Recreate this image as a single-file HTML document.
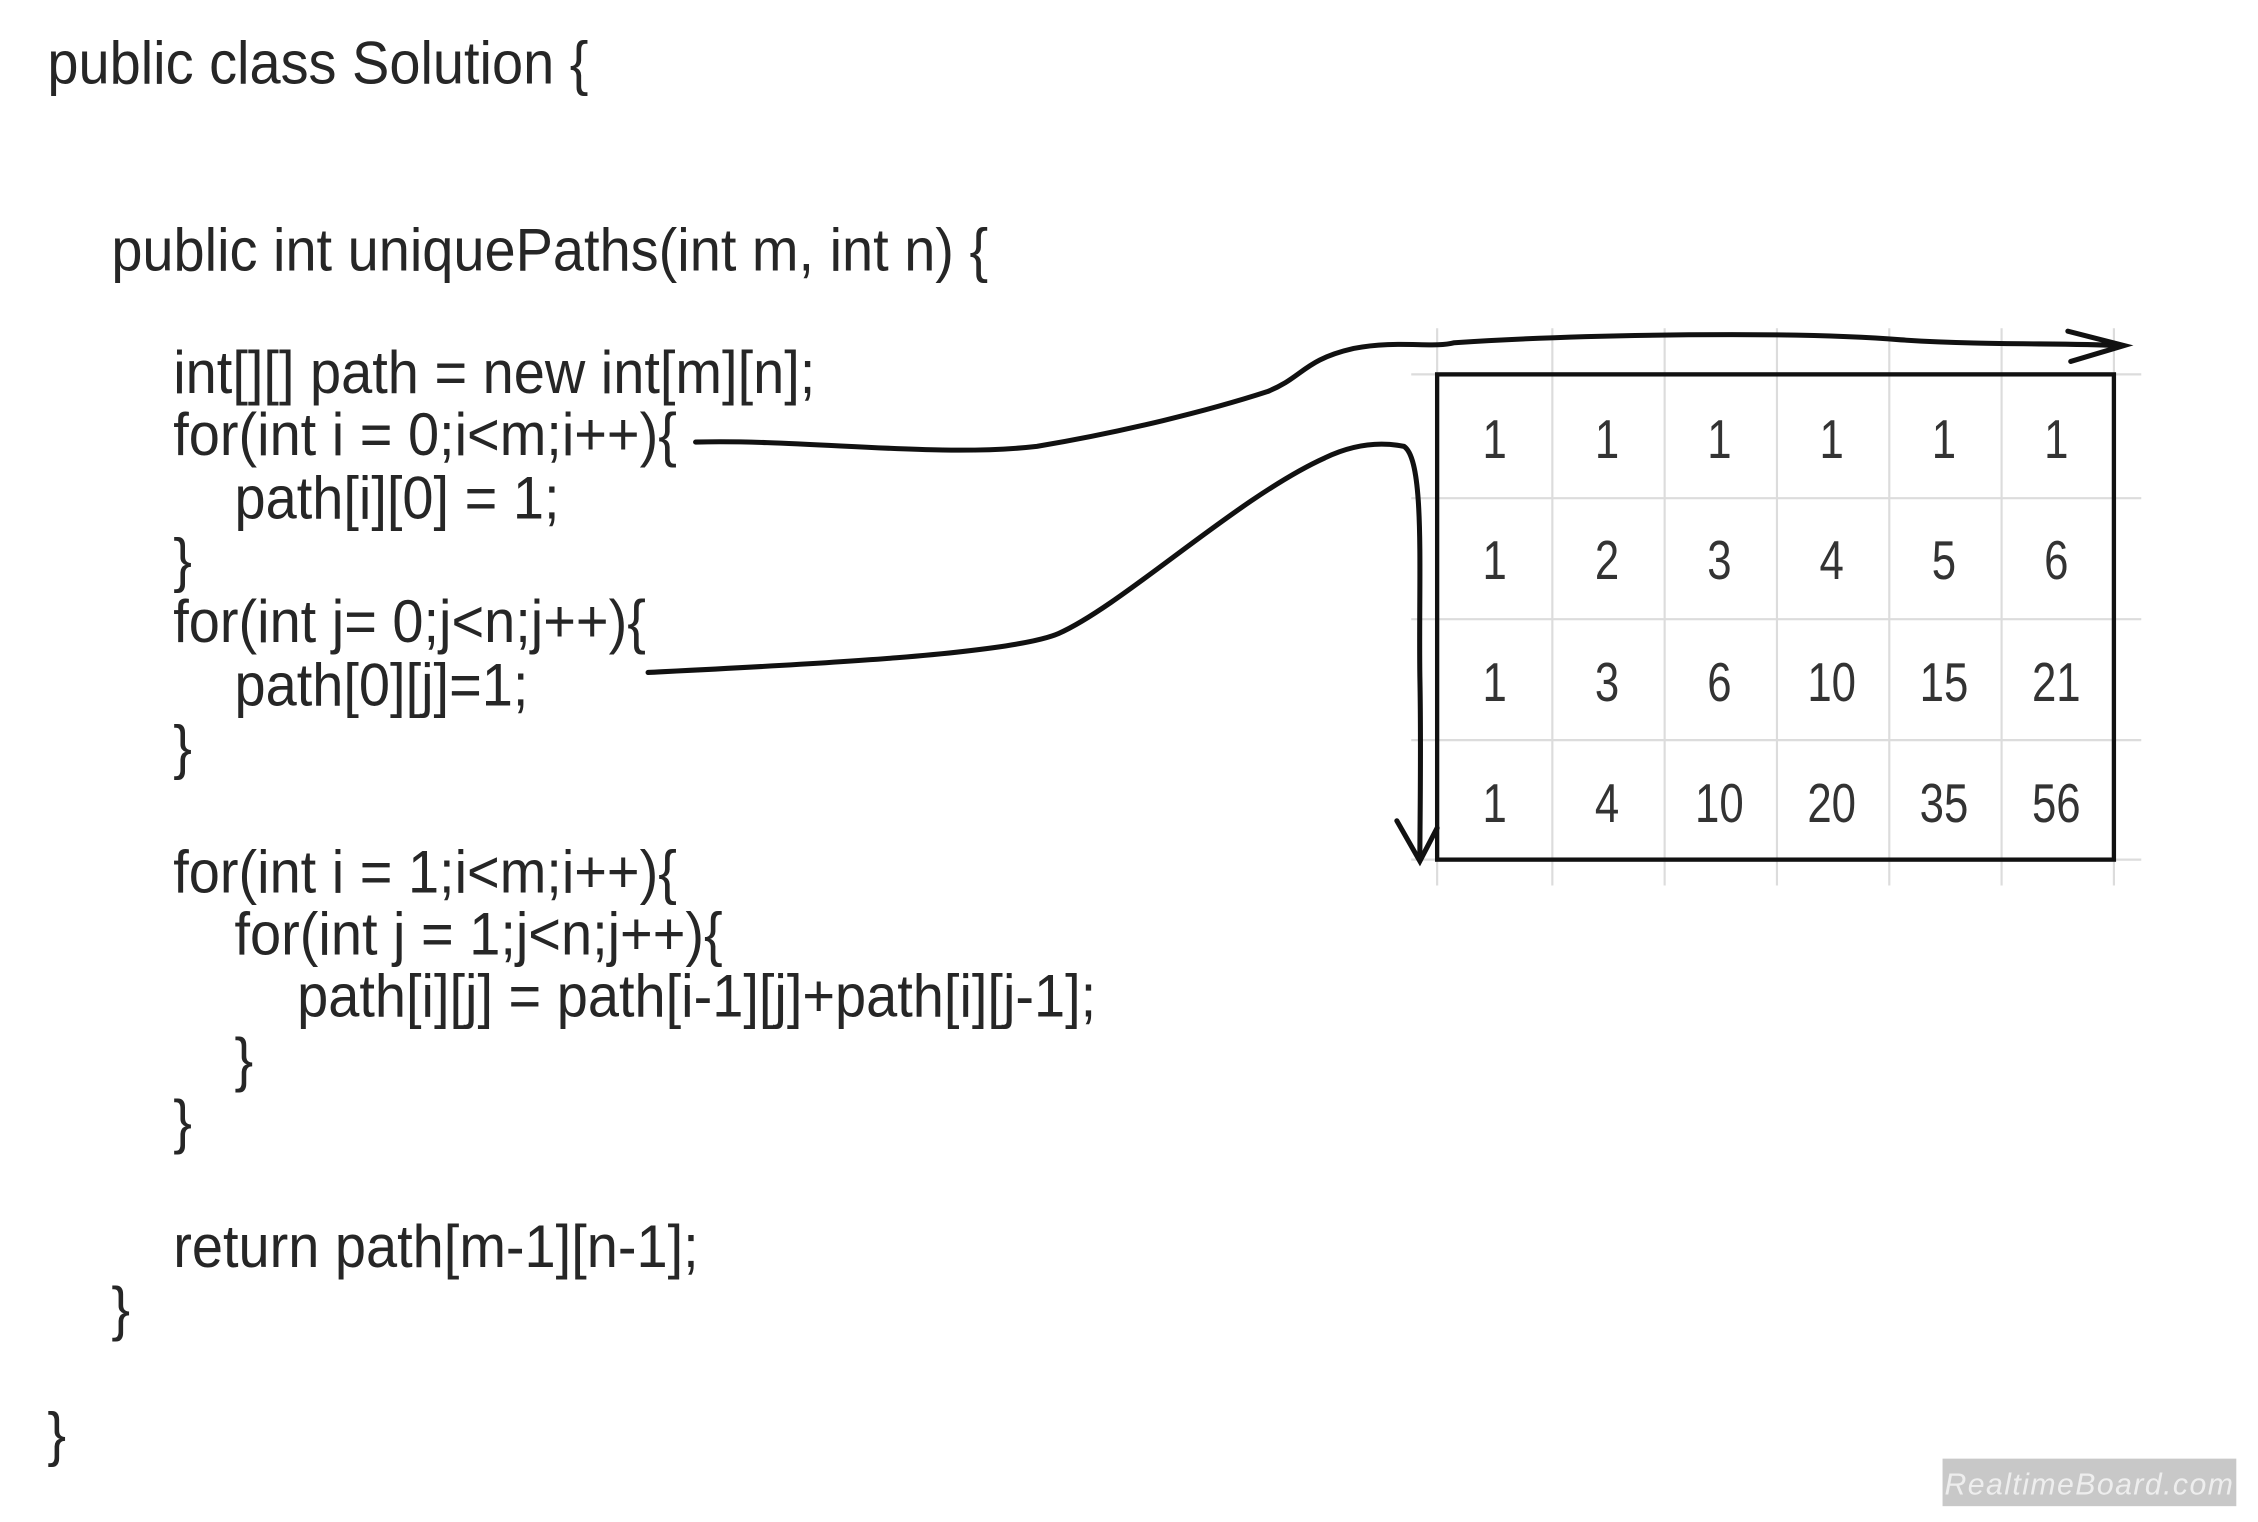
<!DOCTYPE html>
<html><head><meta charset="utf-8"><style>
html,body{margin:0;padding:0;background:#fff;overflow:hidden}
svg{display:block}
</style></head><body>
<svg width="2258" height="1522" viewBox="0 0 1568 1057" xmlns="http://www.w3.org/2000/svg">
<rect width="1568" height="1057" fill="#fff"/>
<g stroke="#dcdcdc" stroke-width="1.5">
<line x1="998" y1="228" x2="998" y2="615"/><line x1="1078" y1="228" x2="1078" y2="615"/><line x1="1156" y1="228" x2="1156" y2="615"/><line x1="1234" y1="228" x2="1234" y2="615"/><line x1="1312" y1="228" x2="1312" y2="615"/><line x1="1390" y1="228" x2="1390" y2="615"/><line x1="1468" y1="228" x2="1468" y2="615"/>
<line x1="980" y1="260" x2="1487" y2="260"/><line x1="980" y1="346" x2="1487" y2="346"/><line x1="980" y1="430" x2="1487" y2="430"/><line x1="980" y1="514" x2="1487" y2="514"/><line x1="980" y1="597" x2="1487" y2="597"/>
</g>
<rect x="998" y="260" width="470" height="337" fill="none" stroke="#111" stroke-width="3"/>
<g fill="none" stroke="#111" stroke-width="3.5" stroke-linecap="round">
<path d="M483 307 C560 305 650 318 720 310 C780 300 840 285 880 272 C905 262 905 250 940 242 C970 236 995 242 1010 238 C1100 232 1250 230 1320 236 C1380 240 1430 238 1472 240"/>
<path d="M1436 230 L1475 240 L1438 251"/>
<path d="M450 467 C550 462 700 455 735 440 C780 420 860 345 920 318 C945 306 965 308 975 310 C990 320 985 400 986 470 C987 520 986 570 986 596"/>
<path d="M970 570 L986 598 L998 575"/>
</g>
<g font-family="'Liberation Sans',Arial,sans-serif" font-size="42" fill="#262626" transform="scale(0.925,1)">
<text x="35.5" y="58">public class Solution {</text>
<text x="83.5" y="188">public int uniquePaths(int m, int n) {</text>
<text x="130" y="273">int[][] path = new int[m][n];</text>
<text x="130" y="316">for(int i = 0;i&lt;m;i++){</text>
<text x="176" y="360">path[i][0] = 1;</text>
<text x="130" y="403">}</text>
<text x="130" y="446">for(int j= 0;j&lt;n;j++){</text>
<text x="176" y="490">path[0][j]=1;</text>
<text x="130" y="533">}</text>
<text x="130" y="620">for(int i = 1;i&lt;m;i++){</text>
<text x="176" y="663">for(int j = 1;j&lt;n;j++){</text>
<text x="223" y="706">path[i][j] = path[i-1][j]+path[i][j-1];</text>
<text x="176" y="750">}</text>
<text x="130" y="793">}</text>
<text x="130" y="880">return path[m-1][n-1];</text>
<text x="83.5" y="923">}</text>
<text x="35.5" y="1010">}</text>
</g>
<g font-family="'Liberation Sans',Arial,sans-serif" font-size="38" fill="#333" text-anchor="middle" transform="scale(0.8,1)">
<text x="1297.5" y="318">1</text><text x="1395" y="318">1</text><text x="1492.5" y="318">1</text><text x="1590" y="318">1</text><text x="1687.5" y="318">1</text><text x="1785" y="318">1</text>
<text x="1297.5" y="402">1</text><text x="1395" y="402">2</text><text x="1492.5" y="402">3</text><text x="1590" y="402">4</text><text x="1687.5" y="402">5</text><text x="1785" y="402">6</text>
<text x="1297.5" y="487">1</text><text x="1395" y="487">3</text><text x="1492.5" y="487">6</text><text x="1590" y="487">10</text><text x="1687.5" y="487">15</text><text x="1785" y="487">21</text>
<text x="1297.5" y="571">1</text><text x="1395" y="571">4</text><text x="1492.5" y="571">10</text><text x="1590" y="571">20</text><text x="1687.5" y="571">35</text><text x="1785" y="571">56</text>
</g>
<rect x="1349" y="1013" width="204" height="33" fill="#c8c8c8"/>
<text x="1451" y="1038" font-family="'Liberation Sans',Arial,sans-serif" font-size="21" fill="#eee" text-anchor="middle" font-style="italic" letter-spacing="1">RealtimeBoard.com</text>
</svg>
</body></html>
